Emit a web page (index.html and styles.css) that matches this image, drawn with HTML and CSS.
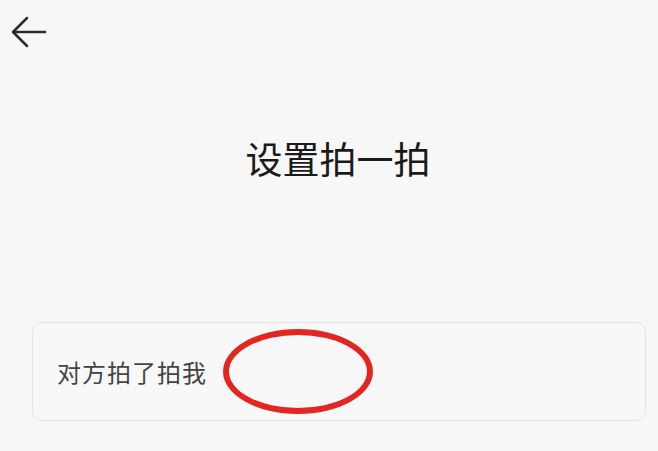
FILE: index.html
```html
<!DOCTYPE html>
<html lang="zh-CN">
<head>
    <meta charset="UTF-8">
    <meta name="viewport" content="width=device-width, initial-scale=1.0">
    <title>设置拍一拍</title>
    <link rel="stylesheet" href="styles.css">
</head>
<body>
    <div class="page">
        <div class="topbar">
            <svg class="back" width="40" height="40" viewBox="0 0 40 40">
                <path d="M45 32 H14 M27 18 L13 32 L27 46" transform="translate(-8 -12)" fill="none" stroke="#2b2b2b" stroke-width="2.5" stroke-linecap="round" stroke-linejoin="round"/>
            </svg>
        </div>
        <h1 class="title">设置拍一拍</h1>
        <div class="card">
            <span class="label">对方拍了拍我</span>
            <div class="mark"></div>
        </div>
    </div>
</body>
</html>
```

FILE: styles.css
```css
/* General Reset */
* {
    margin: 0;
    padding: 0;
    box-sizing: border-box;
}

body {
    font-family: "Noto Sans CJK SC", "Noto Sans", sans-serif;
    background-color: #f7f7f7; /* Soft light gray background */
    color: #222;
    width: 658px;
    height: 451px;
    overflow: hidden;
}

.topbar {
    height: 66px;
    padding: 12px 0 0 8px;
}

.back {
    display: block;
}

.title {
    font-size: 37px;
    font-weight: 400;
    line-height: 44px;
    text-align: center;
    margin-top: 70px;
    padding-left: 18px;
    color: #1a1a1a;
}

.card {
    position: relative;
    margin: 142px 12px 0 32px;
    height: 99px;
    border: 1px solid #e4e4e4;
    border-radius: 10px;
    background-color: #f8f8f8;
    display: flex;
    align-items: center;
    padding-left: 24px;
}

.label {
    font-size: 24px;
    color: #444;
    letter-spacing: 1px;
}

/* Red circle annotation */
.mark {
    position: absolute;
    left: 190px;
    top: 6px;
    width: 150px;
    height: 85px;
    border: 6px solid #e3261f;
    border-radius: 50%;
}
```
